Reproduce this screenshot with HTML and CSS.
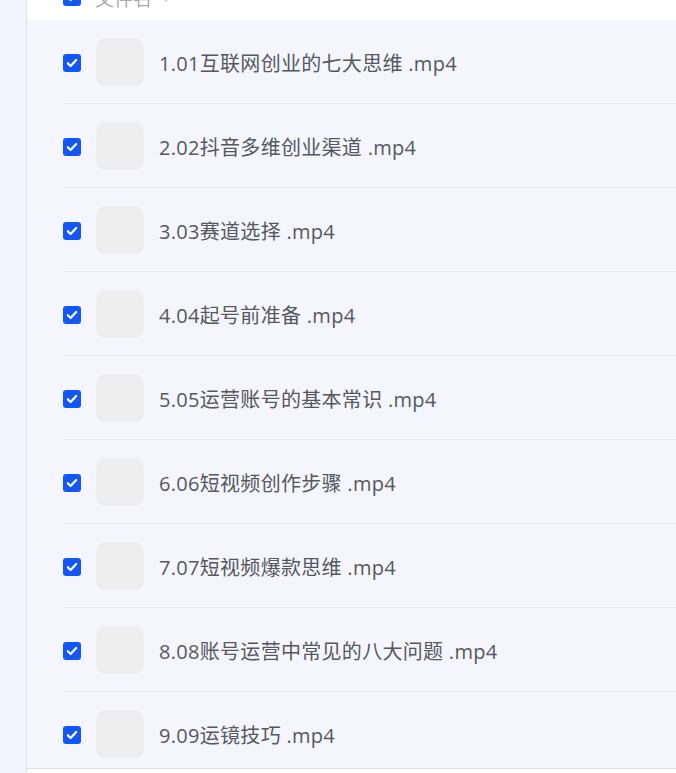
FILE: index.html
```html
<!DOCTYPE html>
<html lang="zh-CN">
<head>
<meta charset="utf-8">
<title>文件列表</title>
<link rel="stylesheet" href="styles.css">
</head>
<body>
<div class="page">
  <aside class="sidebar"></aside>
  <main class="main">
    <div class="head">
      <div class="head-row">
        <span class="check"><svg viewBox="0 0 18 18" width="18" height="18"><path d="M4.8 9.2l2.8 2.8 5.6-6" fill="none" stroke="#fff" stroke-width="2.2" stroke-linecap="round" stroke-linejoin="round"/></svg></span>
        <span class="head-title">文件名</span>
        <span class="caret"></span>
      </div>
    </div>
    <div class="list">
      <div class="row"><span class="check"><svg viewBox="0 0 18 18" width="18" height="18"><path d="M4.8 9.2l2.8 2.8 5.6-6" fill="none" stroke="#fff" stroke-width="2.2" stroke-linecap="round" stroke-linejoin="round"/></svg></span><span class="thumb"></span><span class="name">1.01互联网创业的七大思维 .mp4</span></div>
      <div class="row"><span class="check"><svg viewBox="0 0 18 18" width="18" height="18"><path d="M4.8 9.2l2.8 2.8 5.6-6" fill="none" stroke="#fff" stroke-width="2.2" stroke-linecap="round" stroke-linejoin="round"/></svg></span><span class="thumb"></span><span class="name">2.02抖音多维创业渠道 .mp4</span></div>
      <div class="row"><span class="check"><svg viewBox="0 0 18 18" width="18" height="18"><path d="M4.8 9.2l2.8 2.8 5.6-6" fill="none" stroke="#fff" stroke-width="2.2" stroke-linecap="round" stroke-linejoin="round"/></svg></span><span class="thumb"></span><span class="name">3.03赛道选择 .mp4</span></div>
      <div class="row"><span class="check"><svg viewBox="0 0 18 18" width="18" height="18"><path d="M4.8 9.2l2.8 2.8 5.6-6" fill="none" stroke="#fff" stroke-width="2.2" stroke-linecap="round" stroke-linejoin="round"/></svg></span><span class="thumb"></span><span class="name">4.04起号前准备 .mp4</span></div>
      <div class="row"><span class="check"><svg viewBox="0 0 18 18" width="18" height="18"><path d="M4.8 9.2l2.8 2.8 5.6-6" fill="none" stroke="#fff" stroke-width="2.2" stroke-linecap="round" stroke-linejoin="round"/></svg></span><span class="thumb"></span><span class="name">5.05运营账号的基本常识 .mp4</span></div>
      <div class="row"><span class="check"><svg viewBox="0 0 18 18" width="18" height="18"><path d="M4.8 9.2l2.8 2.8 5.6-6" fill="none" stroke="#fff" stroke-width="2.2" stroke-linecap="round" stroke-linejoin="round"/></svg></span><span class="thumb"></span><span class="name">6.06短视频创作步骤 .mp4</span></div>
      <div class="row"><span class="check"><svg viewBox="0 0 18 18" width="18" height="18"><path d="M4.8 9.2l2.8 2.8 5.6-6" fill="none" stroke="#fff" stroke-width="2.2" stroke-linecap="round" stroke-linejoin="round"/></svg></span><span class="thumb"></span><span class="name">7.07短视频爆款思维 .mp4</span></div>
      <div class="row"><span class="check"><svg viewBox="0 0 18 18" width="18" height="18"><path d="M4.8 9.2l2.8 2.8 5.6-6" fill="none" stroke="#fff" stroke-width="2.2" stroke-linecap="round" stroke-linejoin="round"/></svg></span><span class="thumb"></span><span class="name">8.08账号运营中常见的八大问题 .mp4</span></div>
      <div class="row"><span class="check"><svg viewBox="0 0 18 18" width="18" height="18"><path d="M4.8 9.2l2.8 2.8 5.6-6" fill="none" stroke="#fff" stroke-width="2.2" stroke-linecap="round" stroke-linejoin="round"/></svg></span><span class="thumb"></span><span class="name">9.09运镜技巧 .mp4</span></div>
    </div>
  </main>
</div>
</body>
</html>
```

FILE: styles.css
```css
html, body {
  margin: 0;
  padding: 0;
  background: #ffffff;
  font-family: "Open Sans", "Noto Sans CJK SC", sans-serif;
}

.page {
  display: flex;
  width: 676px;
  height: 773px;
  overflow: hidden;
}

.sidebar {
  width: 26px;
  flex: 0 0 26px;
  background: #f2f5fe;
  border-right: 1px solid #dfe2ea;
}

.main {
  flex: 1;
  display: flex;
  flex-direction: column;
  min-width: 0;
  background: #ffffff;
}

.head {
  height: 20px;
  overflow: hidden;
  background: #ffffff;
}

.head-row {
  height: 46px;
  margin-top: -26px;
  margin-left: 36px;
  display: flex;
  align-items: center;
}

.head-title {
  margin-left: 14px;
  font-size: 19px;
  color: #a9abb2;
  font-family: "Noto Sans CJK SC", sans-serif;
}

.caret {
  margin-left: 10px;
  width: 0;
  height: 0;
  border-left: 4px solid transparent;
  border-right: 4px solid transparent;
  border-top: 5px solid #c4c6cc;
  margin-top: 4px;
}

.list {
  height: 748px;
  overflow: hidden;
  background: #f5f6fd;
  border-bottom: 1px solid #dcdee5;
}

.row {
  margin-left: 36px;
  height: 83px;
  border-bottom: 1px solid #eceef7;
  display: flex;
  align-items: center;
}

.check {
  width: 18px;
  height: 18px;
  flex: 0 0 18px;
  border-radius: 3px;
  background: #1256f5;
  display: flex;
  align-items: center;
  justify-content: center;
}

.row .check {
  margin-top: 2px;
}

.thumb {
  width: 48px;
  height: 48px;
  flex: 0 0 48px;
  margin-left: 15px;
  border-radius: 10px;
  background: #eeeeef;
}

.name {
  margin-left: 15px;
  margin-top: 1px;
  font-size: 20px;
  letter-spacing: 0.3px;
  color: #56585d;
  white-space: nowrap;
}
```
